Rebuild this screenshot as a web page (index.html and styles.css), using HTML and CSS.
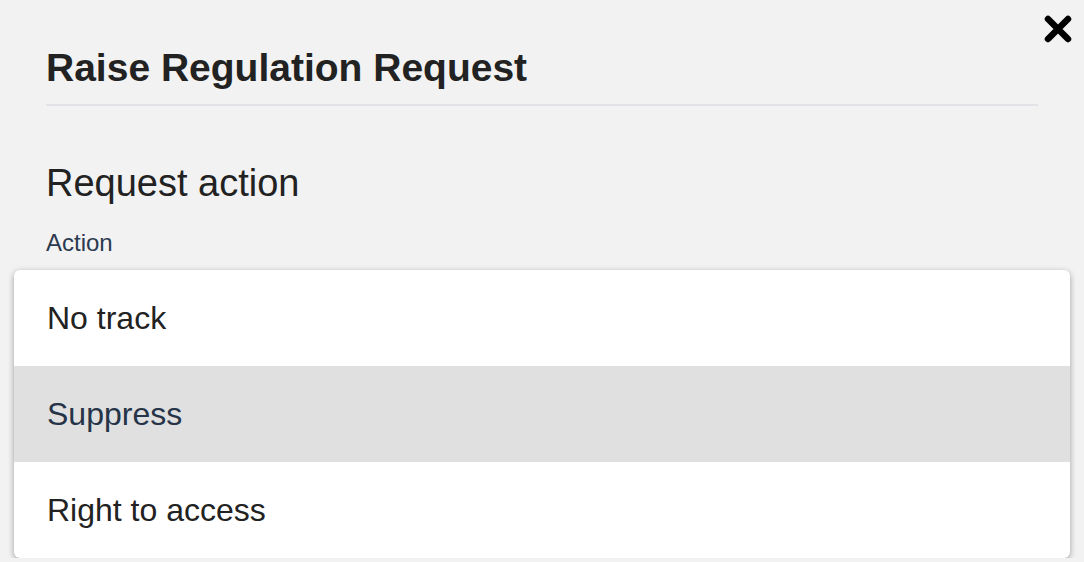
FILE: index.html
```html
<!DOCTYPE html>
<html lang="en">
<head>
  <meta charset="UTF-8">
  <meta name="viewport" content="width=device-width, initial-scale=1.0">
  <title>Raise Regulation Request</title>
  <link rel="stylesheet" href="styles.css">
</head>
<body>

  <div class="modal">
    <button class="close" aria-label="Close">
      <svg width="28" height="28" viewBox="0 0 28 28">
        <path d="M4 4 L24 24 M24 4 L4 24" stroke="#000" stroke-width="6.5" stroke-linecap="round" fill="none"/>
      </svg>
    </button>

    <h1 class="modal-title">Raise Regulation Request</h1>

    <h2 class="section-title">Request action</h2>
    <label class="field-label">Action</label>

    <ul class="dropdown">
      <li>No track</li>
      <li class="active">Suppress</li>
      <li>Right to access</li>
    </ul>
  </div>

</body>
</html>
```

FILE: styles.css
```css
body {
  margin: 0;
  padding: 0;
  background: #f2f2f2;
  font-family: 'Liberation Sans', Arial, sans-serif;
  color: #222;
}
.modal {
  padding: 46px 46px 0 46px;
}
.close {
  position: absolute;
  top: 15px;
  right: 12px;
  background: none;
  border: none;
  padding: 0;
  cursor: pointer;
}
.close svg {
  display: block;
}
.modal-title {
  margin: 0;
  font-size: 39px;
  line-height: 44px;
  font-weight: bold;
  padding-bottom: 14px;
  border-bottom: 2px solid #e1e3e7;
}
.section-title {
  margin: 55px 0 0 0;
  font-size: 38px;
  line-height: 44px;
  font-weight: normal;
}
.field-label {
  display: block;
  margin-top: 24px;
  font-size: 24px;
  line-height: 28px;
  color: #2b3a4f;
}
.dropdown {
  list-style: none;
  margin: 13px -32px 0 -32px;
  padding: 0;
  background: #fff;
  border-radius: 6px;
  box-shadow: 0 2px 6px rgba(0, 0, 0, 0.35);
  overflow: hidden;
}
.dropdown li {
  height: 96px;
  line-height: 96px;
  padding-left: 33px;
  font-size: 32px;
  color: #222;
}
.dropdown li.active {
  background: #e0e0e0;
  color: #263448;
}
```
